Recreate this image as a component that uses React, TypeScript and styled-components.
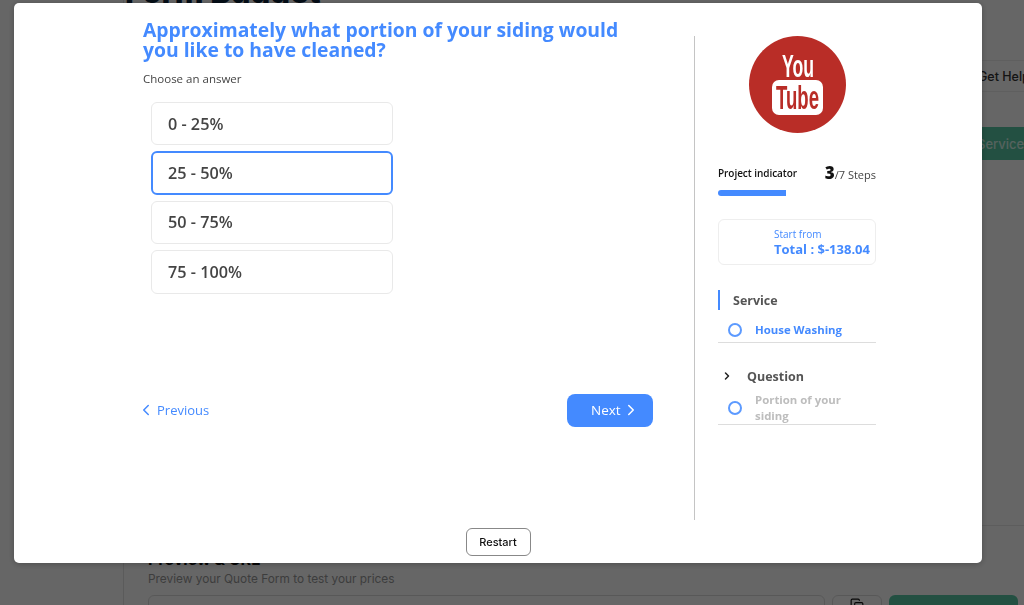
import { ChevronLeft, ChevronRight, Copy } from 'lucide-react';
import styled, { createGlobalStyle } from 'styled-components';

const GlobalStyle = createGlobalStyle`
  html, body {
    margin: 0;
    height: 100%;
    overflow: hidden;
    background: #fff;
    font-family: "Open Sans", "Liberation Sans", sans-serif;
  }
`;

const BLUE = '#448AFF';
const GREEN = '#58C9A5';

/* page behind the dialog */
const Page = styled.div`
  display: flex;
  width: 1024px;
  height: 605px;
  overflow: hidden;
`;

const Sidebar = styled.div`
  width: 123px;
  flex-shrink: 0;
  border-right: 1px solid #e4e4e4;
`;

const Main = styled.div`
  flex: 1;
  min-width: 0;
  display: flex;
  flex-direction: column;
`;

const PageTitle = styled.div`
  height: 85px;
  margin-top: -25px;
  padding-left: 1px;
  font: 800 31px/34px Inter, sans-serif;
  color: #0b2239;
`;

const HelpRow = styled.div`
  height: 32px;
  box-sizing: border-box;
  display: flex;
  align-items: center;
  padding-left: 854px;
  border-top: 1px solid #eee;
  border-bottom: 1px solid #eee;
  font: 500 12.5px Inter, sans-serif;
  color: #333;
  white-space: nowrap;
`;

const ServiceRow = styled.div`
  margin: 35px 0 0 849px;
  height: 33px;
  display: flex;
  align-items: center;
  padding-left: 4px;
  background: ${GREEN};
  font: 500 13px Inter, sans-serif;
  color: #d4f5ea;
`;

const Preview = styled.div`
  margin-top: auto;
  height: 80px;
  box-sizing: border-box;
  flex-shrink: 0;
  border-top: 1px solid #e8e8e8;
  padding: 24px 6px 0 24px;
`;

const PreviewTitle = styled.div`
  font: 700 16px/18px Inter, sans-serif;
  color: #111;
`;

const PreviewText = styled.div`
  margin-top: 4px;
  font: 400 11.85px/14px Inter, sans-serif;
  color: #999;
`;

const PreviewControls = styled.div`
  display: flex;
  gap: 7px;
  margin-top: 9px;
`;

const PreviewInput = styled.div`
  flex: 1;
  height: 30px;
  border: 1px solid #ddd;
  border-radius: 6px;
`;

const PreviewIcon = styled.div`
  width: 50px;
  height: 30px;
  display: flex;
  justify-content: center;
  padding-top: 2px;
  box-sizing: border-box;
  border: 1px solid #ddd;
  border-radius: 6px;
  color: #111;
`;

const PreviewAction = styled.div`
  width: 129px;
  height: 30px;
  border-radius: 6px;
  background: ${GREEN};
`;

const Overlay = styled.div`
  position: fixed;
  inset: 0;
  background: rgba(0, 0, 0, 0.6);
`;

const Modal = styled.div`
  position: fixed;
  left: 14px;
  top: 3px;
  width: 968px;
  height: 560px;
  display: flex;
  flex-direction: column;
  background: #fff;
  border-radius: 5px;
  box-shadow: 0 1px 6px rgba(0, 0, 0, 0.25);
`;

const Body = styled.div`
  height: 517px;
  display: flex;
  padding-left: 129px;
`;

/* question column */
const QuestionColumn = styled.div`
  width: 510px;
  display: flex;
  flex-direction: column;
  padding-top: 17px;
`;

const Title = styled.h1`
  margin: 0;
  font-size: 19.35px;
  line-height: 20px;
  font-weight: 700;
  color: ${BLUE};
`;

const Hint = styled.div`
  margin-top: 11px;
  font-size: 11.5px;
  line-height: 16px;
  color: #444;
`;

const Options = styled.div`
  display: flex;
  flex-direction: column;
  gap: 6px;
  width: 242px;
  margin: 15px 0 0 8px;
`;

const Option = styled.div<{ $selected?: boolean }>`
  height: 43.4px;
  box-sizing: border-box;
  display: flex;
  align-items: center;
  padding-left: ${props => (props.$selected ? '15px' : '16px')};
  border-radius: 6px;
  border: ${props => (props.$selected ? `2px solid ${BLUE}` : '1px solid #e9e9e9')};
  font-size: 16.2px;
  font-weight: 600;
  color: #444;
`;

const Nav = styled.div`
  display: flex;
  align-items: center;
  justify-content: space-between;
  margin-top: 100.4px;
`;

const PreviousButton = styled.div`
  display: flex;
  align-items: center;
  gap: 1.75px;
  padding-bottom: 1px;
  font-size: 13px;
  color: ${BLUE};
`;

const PreviousIcon = styled(ChevronLeft)`
  margin-left: -5.75px;
`;

const NextButton = styled.div`
  width: 86px;
  height: 33px;
  box-sizing: border-box;
  display: flex;
  align-items: center;
  padding: 0 0 1px 24px;
  border-radius: 8px;
  background: ${BLUE};
  font-size: 13.5px;
  color: #fff;
`;

const NextIcon = styled(ChevronRight)`
  margin-left: 1px;
`;

/* summary column */
const SummaryColumn = styled.div`
  width: 158px;
  margin: 33px 0 0 41px;
  padding-left: 23px;
  border-left: 1px solid #c4c4c4;
  display: flex;
  flex-direction: column;
`;

const LogoWrap = styled.div`
  display: flex;
  justify-content: center;
  height: 97px;
`;

const ProgressHead = styled.div`
  display: flex;
  align-items: center;
  justify-content: space-between;
  margin-top: 29px;
  height: 22px;
`;

const ProgressLabel = styled.span`
  font-size: 10px;
  letter-spacing: -0.05px;
  font-weight: 600;
  color: #111;
`;

const Steps = styled.span`
  margin-bottom: 2px;
  font-size: 11px;
  color: #444;
`;

const StepNumber = styled.b`
  font-size: 17px;
  font-weight: 800;
  color: #111;
`;

const ProgressTrack = styled.div`
  margin-top: 6px;
  height: 6px;
`;

const ProgressFill = styled.div`
  height: 100%;
  background: ${BLUE};
  border-radius: 3px 0 0 3px;
`;

const PriceCard = styled.div`
  margin-top: 23px;
  height: 46px;
  box-sizing: border-box;
  padding: 8px 0 0 55px;
  border: 1px solid #eee;
  border-radius: 6px;
  color: ${BLUE};
`;

const PriceLabel = styled.div`
  font-size: 10px;
  line-height: 13px;
  font-weight: 500;
`;

const PriceValue = styled.div`
  font-size: 13px;
  line-height: 17px;
  font-weight: 700;
  white-space: nowrap;
`;

const Section = styled.div<{ $active?: boolean }>`
  display: flex;
  align-items: center;
  height: 20px;
  font-size: 12.5px;
  font-weight: 700;
  color: #555;
  padding-left: ${props => (props.$active ? '13px' : '3px')};
  border-left: ${props => (props.$active ? `2.5px solid ${BLUE}` : '0')};
  gap: 14px;
`;

const ServiceSection = styled(Section)`
  margin-top: 25px;
`;

const QuestionSection = styled(Section)`
  margin-top: 23px;
`;

const StepRow = styled.div<{ $pending?: boolean }>`
  display: flex;
  align-items: center;
  gap: 13px;
  padding-left: 10px;
  border-bottom: 1.5px solid #ddd;
  font-size: 11.4px;
  line-height: 16px;
  font-weight: 700;
  color: ${props => (props.$pending ? '#bdbdbd' : BLUE)};
`;

const FirstStep = styled(StepRow)`
  margin-top: 2px;
  height: 31px;
  box-sizing: border-box;
  padding-top: 6px;
`;

const SecondStep = styled(StepRow)`
  margin-top: 1px;
  height: 38px;
  box-sizing: border-box;
  padding-top: 4px;
`;

const StepDot = styled.span`
  width: 14px;
  height: 14px;
  flex-shrink: 0;
  box-sizing: border-box;
  border: 2px solid #5c9aff;
  border-radius: 50%;
`;

const StepText = styled.span`
  width: 100px;
`;

const PendingText = styled(StepText)`
  margin-top: 1px;
`;

const Footer = styled.div`
  display: flex;
  justify-content: center;
  padding-top: 8px;
`;

const RestartButton = styled.div`
  width: 65px;
  height: 28px;
  box-sizing: border-box;
  display: flex;
  align-items: center;
  justify-content: center;
  border: 1px solid #888;
  border-radius: 6px;
  font: 500 11px Inter, sans-serif;
  color: #111;
`;

function YoutubeLogo(): JSX.Element {
  return (
    <svg width="97" height="97" viewBox="0 0 97 97">
      <circle cx="48.5" cy="48.5" r="48.5" fill="#B92D27" />
      <text
        x="33"
        y="41"
        textLength="32"
        lengthAdjust="spacingAndGlyphs"
        fontFamily="Liberation Sans"
        fontWeight="700"
        fontSize="31"
        fill="#fff"
      >
        You
      </text>
      <rect x="23" y="44" width="51" height="35" rx="7" fill="#fff" />
      <text
        x="27"
        y="73"
        textLength="43"
        lengthAdjust="spacingAndGlyphs"
        fontFamily="Liberation Sans"
        fontWeight="700"
        fontSize="33"
        fill="#B92D27"
      >
        Tube
      </text>
    </svg>
  );
}

const options = ['0 - 25%', '25 - 50%', '50 - 75%', '75 - 100%'];

function App(): JSX.Element {
  return (
    <>
      <GlobalStyle />
      <Page>
        <Sidebar />
        <Main>
          <PageTitle>Form Budget</PageTitle>
          <HelpRow>Get Help</HelpRow>
          <ServiceRow>Service</ServiceRow>
          <Preview>
            <PreviewTitle>Preview &amp; URL</PreviewTitle>
            <PreviewText>Preview your Quote Form to test your prices</PreviewText>
            <PreviewControls>
              <PreviewInput />
              <PreviewIcon>
                <Copy size={14} />
              </PreviewIcon>
              <PreviewAction />
            </PreviewControls>
          </Preview>
        </Main>
      </Page>
      <Overlay />
      <Modal>
        <Body>
          <QuestionColumn>
            <Title>
              Approximately what portion of your siding would
              <br />
              you like to have cleaned?
            </Title>
            <Hint>Choose an answer</Hint>
            <Options>
              {options.map((option) => (
                <Option key={option} $selected={option === '25 - 50%'}>
                  {option}
                </Option>
              ))}
            </Options>
            <Nav>
              <PreviousButton>
                <PreviousIcon size={18} strokeWidth={2} />
                Previous
              </PreviousButton>
              <NextButton>
                Next
                <NextIcon size={18} strokeWidth={2} />
              </NextButton>
            </Nav>
          </QuestionColumn>
          <SummaryColumn>
            <LogoWrap>
              <YoutubeLogo />
            </LogoWrap>
            <ProgressHead>
              <ProgressLabel>Project indicator</ProgressLabel>
              <Steps>
                <StepNumber>3</StepNumber>/7 Steps
              </Steps>
            </ProgressHead>
            <ProgressTrack>
              <ProgressFill style={{ width: `${(3 / 7) * 100}%` }} />
            </ProgressTrack>
            <PriceCard>
              <PriceLabel>Start from</PriceLabel>
              <PriceValue>Total : $-138.04</PriceValue>
            </PriceCard>
            <ServiceSection $active>Service</ServiceSection>
            <FirstStep>
              <StepDot />
              <StepText>House Washing</StepText>
            </FirstStep>
            <QuestionSection>
              <ChevronRight size={12} strokeWidth={3} color="#222" />
              Question
            </QuestionSection>
            <SecondStep $pending>
              <StepDot />
              <PendingText>Portion of your siding</PendingText>
            </SecondStep>
          </SummaryColumn>
        </Body>
        <Footer>
          <RestartButton>Restart</RestartButton>
        </Footer>
      </Modal>
    </>
  );
}

export default App;
